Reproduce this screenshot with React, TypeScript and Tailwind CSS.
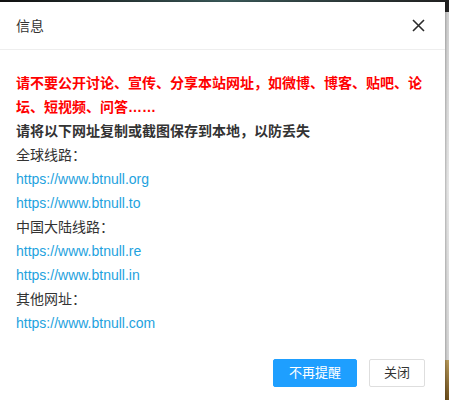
export default function App() {
  const font = {
    fontFamily: '"Liberation Sans", "Noto Sans CJK SC", sans-serif',
  };

  const lines = [
    { type: "label", text: "全球线路：" },
    { type: "link", text: "https://www.btnull.org" },
    { type: "link", text: "https://www.btnull.to" },
    { type: "label", text: "中国大陆线路：" },
    { type: "link", text: "https://www.btnull.re" },
    { type: "link", text: "https://www.btnull.in" },
    { type: "label", text: "其他网址：" },
    { type: "link", text: "https://www.btnull.com" },
  ];

  return (
    <div className="flex h-[400px] w-[449px] flex-col overflow-hidden bg-[#1b1b1b]" style={font}>
      {/* page behind the dialog */}
      <div className="h-[2px] w-full bg-gradient-to-r from-[#111] via-[#3a5a5a] to-[#222]" />
      <div className="flex flex-1">
        <div className="relative z-10 flex w-[445px] flex-col bg-white shadow-[1px_0_2px_rgba(0,0,0,0.25)]">
          {/* title */}
          <div className="flex h-[48px] items-center justify-between border-b border-[#eee] pl-[16px] pr-[19px]">
            <span className="pt-[2px] text-[14px] text-[#333]">信息</span>
            <button className="flex h-[16px] w-[16px] items-center justify-center text-[#333]">
              <svg width="13" height="13" viewBox="0 0 13 13">
                <path d="M1 1L12 12M12 1L1 12" stroke="#2b2b2b" strokeWidth="1.6" />
              </svg>
            </button>
          </div>

          {/* content */}
          <div className="px-[16px] pb-[19px] pt-[21px] text-[14px] leading-[24px] text-[#333]">
            <p className="font-bold text-[#ff0000]">
              请不要公开讨论、宣传、分享本站网址，如微博、博客、贴吧、论坛、短视频、问答……
            </p>
            <p className="font-bold text-[#333]">请将以下网址复制或截图保存到本地，以防丢失</p>
            {lines.map((l) =>
              l.type === "link" ? (
                <div key={l.text}>
                  <a className="text-[#1ea2de]">{l.text}</a>
                </div>
              ) : (
                <div key={l.text}>{l.text}</div>
              )
            )}
          </div>

          {/* buttons */}
          <div className="flex justify-end gap-[12px] pr-[20px] pt-[5px]">
            <button className="h-[28px] rounded-[2px] border border-[#1E9FFF] bg-[#1E9FFF] px-[15px] text-[13px] leading-[26px] text-white">
              不再提醒
            </button>
            <button className="h-[28px] rounded-[2px] border border-[#dedede] bg-white px-[14px] text-[13px] leading-[26px] text-[#333]">
              关闭
            </button>
          </div>
        </div>
        <div className="flex flex-1 flex-col">
          <div className="h-[10px] bg-[#222]" />
          <div className="flex-1 bg-gradient-to-b from-[#cfcfcf] via-[#e6e6e6] to-[#d4d4d4]" />
          <div className="h-[40px] bg-gradient-to-b from-[#b89a5a] to-[#6e4f1c]" />
        </div>
      </div>
    </div>
  );
}
